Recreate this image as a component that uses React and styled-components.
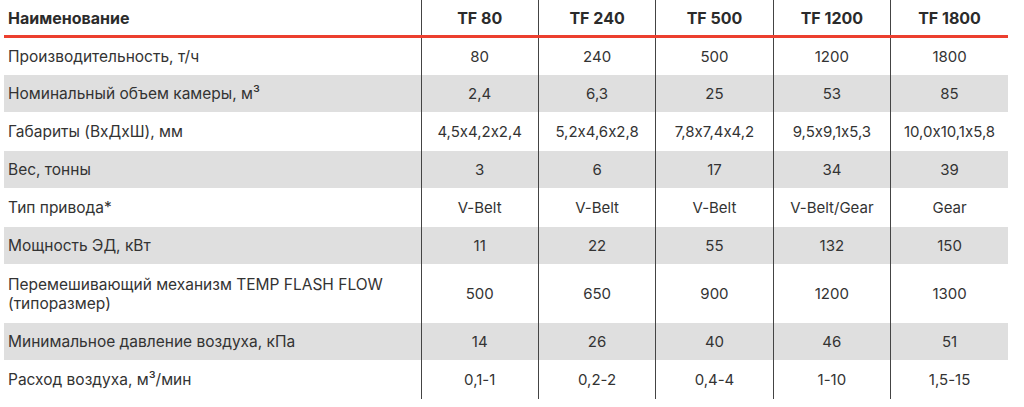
import React from 'react'
import styled, { createGlobalStyle } from 'styled-components'

const GlobalStyle = createGlobalStyle`
  body {
    margin: 0;
    background: #fff;
    font-family: 'Inter', 'Open Sans', sans-serif;
    font-feature-settings: 'calt' 0;
    color: #333;
  }
`

const models = ['TF 80', 'TF 240', 'TF 500', 'TF 1200', 'TF 1800']

const rows = [
  ['Производительность, т/ч', '80', '240', '500', '1200', '1800'],
  ['Номинальный объем камеры, м³', '2,4', '6,3', '25', '53', '85'],
  ['Габариты (ВхДхШ), мм', '4,5x4,2x2,4', '5,2x4,6x2,8', '7,8x7,4x4,2', '9,5x9,1x5,3', '10,0x10,1x5,8'],
  ['Вес, тонны', '3', '6', '17', '34', '39'],
  ['Тип привода*', 'V-Belt', 'V-Belt', 'V-Belt', 'V-Belt/Gear', 'Gear'],
  ['Мощность ЭД, кВт', '11', '22', '55', '132', '150'],
  ['Перемешивающий механизм TEMP FLASH FLOW (типоразмер)', '500', '650', '900', '1200', '1300'],
  ['Минимальное давление воздуха, кПа', '14', '26', '40', '46', '51'],
  ['Расход воздуха, м³/мин', '0,1-1', '0,2-2', '0,4-4', '1-10', '1,5-15'],
]

function SpecTable() {
  return (
    <Wrap>
      <Table>
        <colgroup>
          <col style={{ width: '417px' }} />
          {models.map(m => <col key={m} />)}
        </colgroup>
        <thead>
          <tr>
            <HeadCell>Наименование</HeadCell>
            {models.map(m => (
              <HeadCell key={m} $value>{m}</HeadCell>
            ))}
          </tr>
        </thead>
        <tbody>
          {rows.map((row, i) => (
            <Row key={i} $shaded={i % 2 === 1} $tall={row[0].length > 40}>
              <Cell>{row[0]}</Cell>
              {row.slice(1).map((v, j) => (
                <Cell key={j} $value>{v}</Cell>
              ))}
            </Row>
          ))}
        </tbody>
      </Table>
    </Wrap>
  )
}

export default function App() {
  return (
    <>
      <GlobalStyle />
      <SpecTable />
    </>
  )
}

const Wrap = styled.div`
  padding: 0 16px 0 4px;
`

const Table = styled.table`
  width: 1004px;
  border-collapse: collapse;
  table-layout: fixed;
  line-height: 19px;
`

const HeadCell = styled.th`
  height: 34px;
  padding: ${p => (p.$value ? '1px 0 0' : '1px 4px 0')};
  font-size: 16px;
  font-weight: 700;
  text-align: ${p => (p.$value ? 'center' : 'left')};
  color: #2b2b2b;
  border-bottom: 3px solid #ec3f2f;
  border-left: ${p => (p.$value ? '1px solid #444' : 'none')};
  vertical-align: middle;
`

const Row = styled.tr`
  height: ${p => (p.$tall ? '58px' : '38px')};
  background: ${p => (p.$shaded ? '#dfdfdf' : '#fff')};
  border-top: 1px solid #fff;
`

const Cell = styled.td`
  padding: ${p => (p.$value ? '0' : '0 4px')};
  font-size: ${p => (p.$value ? '15px' : '15.5px')};
  text-align: ${p => (p.$value ? 'center' : 'left')};
  border-left: ${p => (p.$value ? '1px solid #444' : 'none')};
  vertical-align: middle;
  white-space: ${p => (p.$value ? 'nowrap' : 'normal')};
`
